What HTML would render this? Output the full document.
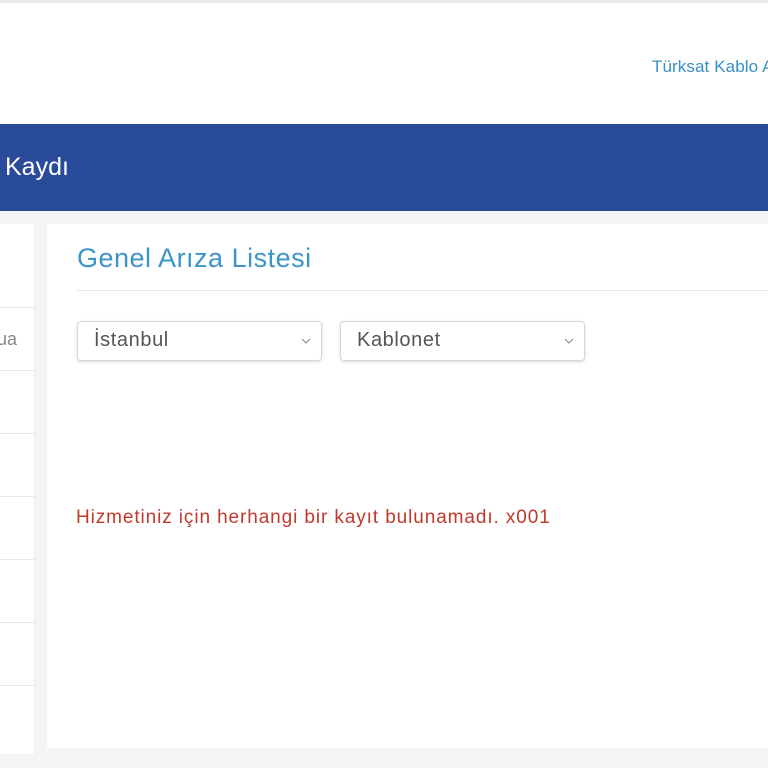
<!DOCTYPE html>
<html><head><meta charset="utf-8"><style>
*{margin:0;padding:0;box-sizing:border-box}
body{width:768px;height:768px;overflow:hidden;background:#f4f3f5;font-family:"Liberation Sans",sans-serif;position:relative}
.top{position:absolute;left:0;top:0;width:768px;height:124px;background:#fff;border-top:3px solid #ececec}
.brand{position:absolute;left:652px;top:54px;color:#3a8fc4;font-size:17px;white-space:nowrap;letter-spacing:0.1px}
.bar{position:absolute;left:0;top:124px;width:768px;height:87px;background:#2a4a9a}
.bar span{position:absolute;left:5px;top:29px;color:#fff;font-size:25px}
.side{position:absolute;left:0;top:224px;width:35px;height:530px;background:#fff;border-right:1px solid #eee}
.side div{position:absolute;left:0;width:35px;height:1px;background:#e8e8e8}
.main{position:absolute;left:47px;top:224px;width:721px;height:524px;background:#fff}
h1{position:absolute;left:30px;top:19px;font-weight:normal;font-size:27px;color:#3c95c8;letter-spacing:0.5px}
.hr{position:absolute;left:30px;top:66px;width:691px;height:1px;background:#e5e5e5}
.sel{position:absolute;top:97px;width:245px;height:40px;border:1px solid #d8d8d8;border-radius:4px;box-shadow:0 1px 3px rgba(0,0,0,.15);font-size:20px;color:#555;padding:7px 0 0 16px;letter-spacing:0.6px}
.sel svg{position:absolute;right:10px;top:16px}
.err{position:absolute;left:29px;top:283px;color:#c0392b;font-size:19px;letter-spacing:0.9px}
</style></head><body>
<div class="top"><div class="brand">Türksat Kablo A.Ş.</div></div>
<div class="bar"><span>Kaydı</span></div>
<div class="side">
<div style="top:83px"></div><div style="top:146px"></div><div style="top:209px"></div><div style="top:272px"></div><div style="top:335px"></div><div style="top:398px"></div><div style="top:461px"></div>
<span style="position:absolute;left:-3px;top:105px;color:#888;font-size:18px">ua</span>
</div>
<div class="main">
<h1>Genel Arıza Listesi</h1>
<div class="hr"></div>
<div class="sel" style="left:30px">İstanbul<svg width="10" height="6"><path d="M1 1L5 5L9 1" stroke="#888" fill="none"/></svg></div>
<div class="sel" style="left:293px">Kablonet<svg width="10" height="6"><path d="M1 1L5 5L9 1" stroke="#888" fill="none"/></svg></div>
<div class="err">Hizmetiniz için herhangi bir kayıt bulunamadı. x001</div>
</div>
</body></html>
